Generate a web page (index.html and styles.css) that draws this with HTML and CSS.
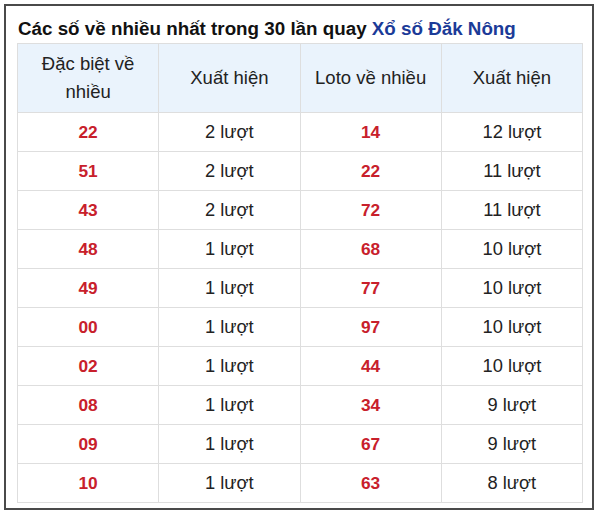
FILE: index.html
```html
<!DOCTYPE html>
<html lang="vi">
<head>
<meta charset="utf-8">
<link rel="stylesheet" href="styles.css">
</head>
<body>
<div class="frame">
  <h2 class="title">Các số về nhiều nhất trong 30 lần quay <span class="link">Xổ số Đắk Nông</span></h2>
  <table class="stats">
    <thead>
      <tr><th>Đặc biệt về<br>nhiều</th><th>Xuất hiện</th><th>Loto về nhiều</th><th>Xuất hiện</th></tr>
    </thead>
    <tbody>
      <tr><td class="num">22</td><td>2 lượt</td><td class="num">14</td><td>12 lượt</td></tr>
      <tr><td class="num">51</td><td>2 lượt</td><td class="num">22</td><td>11 lượt</td></tr>
      <tr><td class="num">43</td><td>2 lượt</td><td class="num">72</td><td>11 lượt</td></tr>
      <tr><td class="num">48</td><td>1 lượt</td><td class="num">68</td><td>10 lượt</td></tr>
      <tr><td class="num">49</td><td>1 lượt</td><td class="num">77</td><td>10 lượt</td></tr>
      <tr><td class="num">00</td><td>1 lượt</td><td class="num">97</td><td>10 lượt</td></tr>
      <tr><td class="num">02</td><td>1 lượt</td><td class="num">44</td><td>10 lượt</td></tr>
      <tr><td class="num">08</td><td>1 lượt</td><td class="num">34</td><td>9 lượt</td></tr>
      <tr><td class="num">09</td><td>1 lượt</td><td class="num">67</td><td>9 lượt</td></tr>
      <tr><td class="num">10</td><td>1 lượt</td><td class="num">63</td><td>8 lượt</td></tr>
    </tbody>
  </table>
</div>
</body>
</html>
```
FILE: styles.css
```css
html, body {
  margin: 0;
  padding: 0;
  background: #fff;
}
body {
  font-family: "Liberation Sans", Arial, sans-serif;
  color: #222;
}
.frame {
  margin: 4px 0 0 4px;
  border: 2px solid #4a4a4a;
  padding: 12px 9px 0 11px;
  box-sizing: border-box;
  width: 590px;
  height: 506px;
}
.title {
  margin: 0 0 3px 1px;
  font-size: 18.8px;
  line-height: 22px;
  font-weight: bold;
  color: #111;
}
.link {
  color: #1b3b98;
}
.stats {
  width: 566px;
  border-collapse: collapse;
  table-layout: fixed;
}
.stats th, .stats td {
  border: 1px solid #dedede;
  text-align: center;
  width: 25%;
}
.stats th {
  background: #eaf3fc;
  font-weight: normal;
  font-size: 18.5px;
  line-height: 28px;
  padding: 6px 4px;
  color: #222;
}
.stats td {
  font-size: 18.3px;
  line-height: 28px;
  padding: 5px 4px;
  color: #222;
}
.stats td.num {
  font-size: 17.3px;
  color: #c8202b;
  font-weight: bold;
}
```
